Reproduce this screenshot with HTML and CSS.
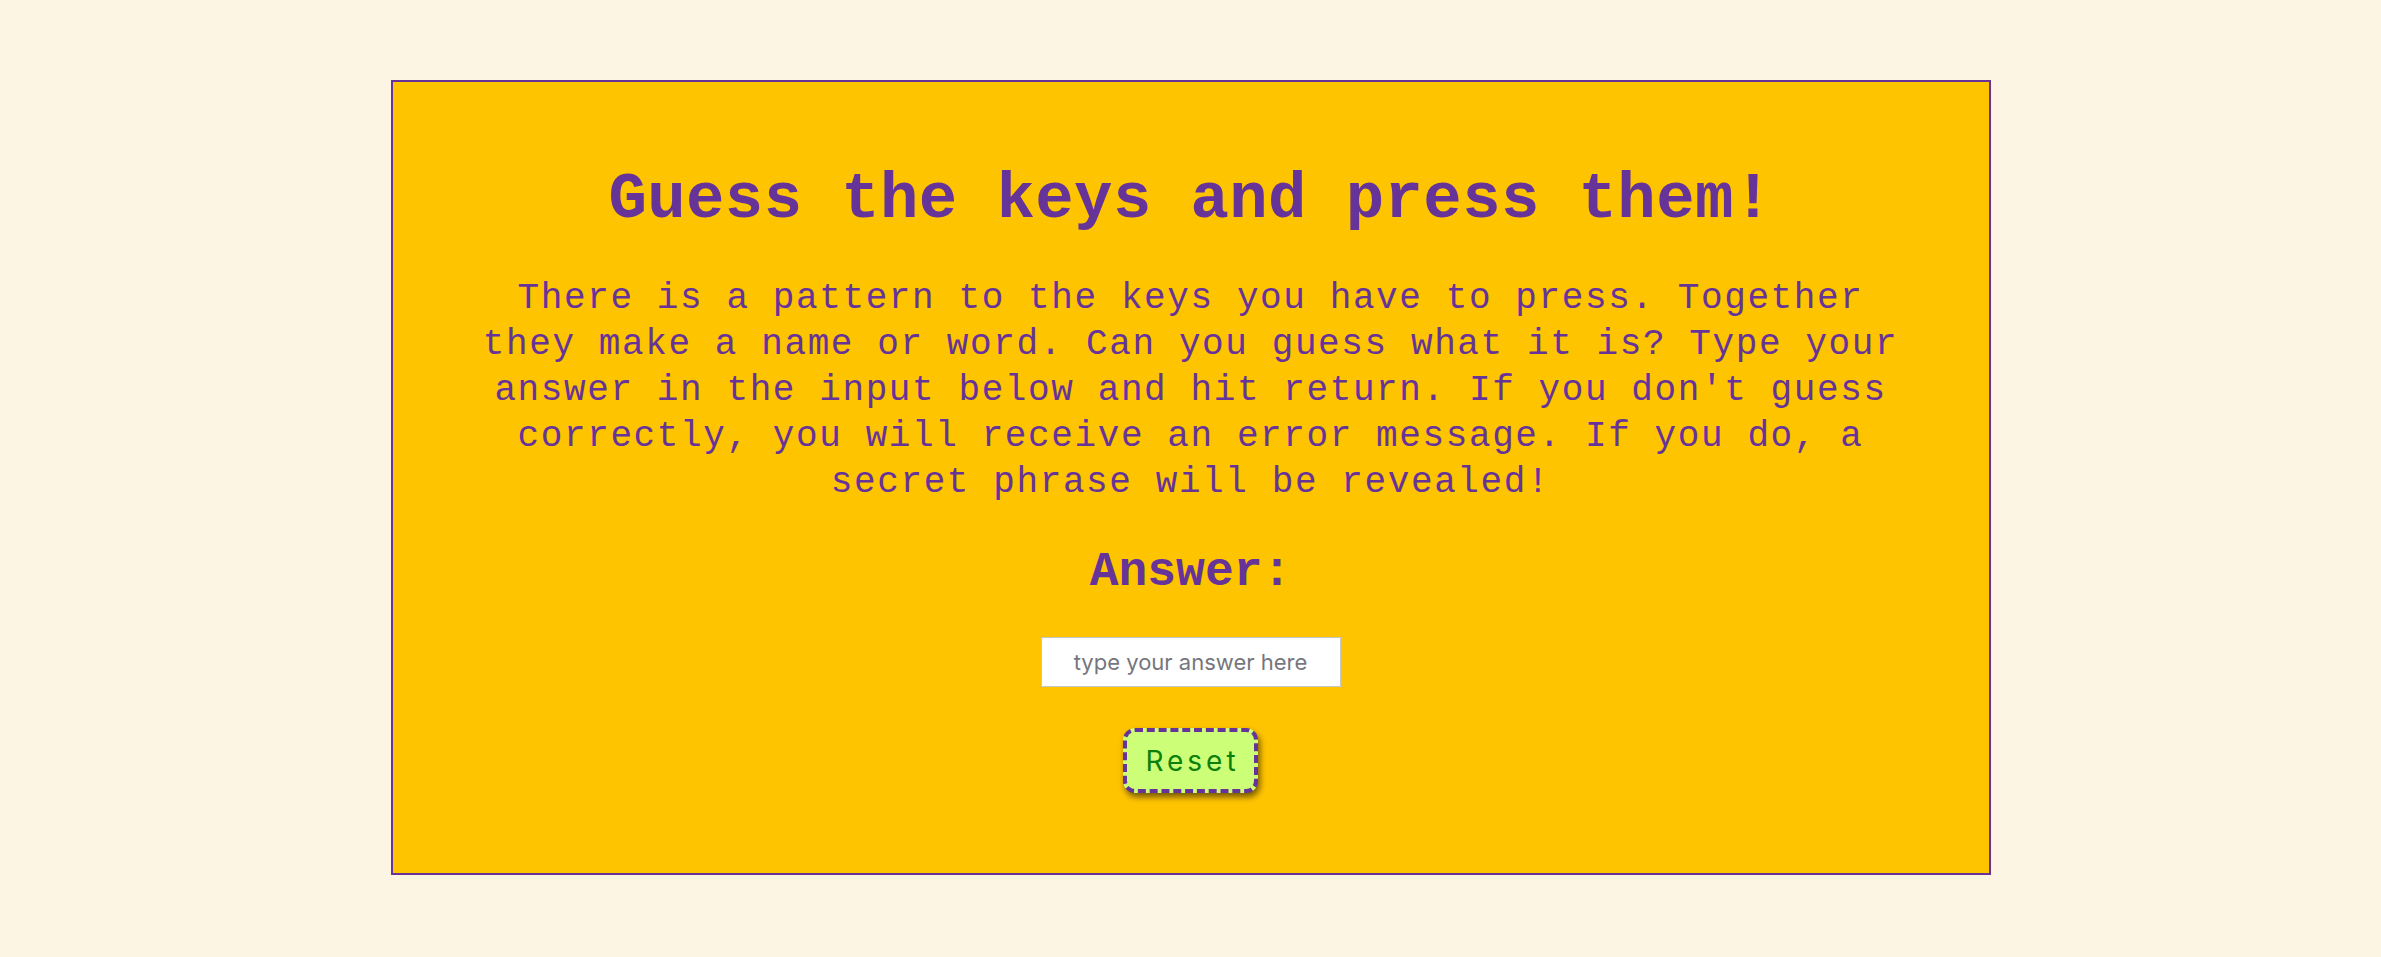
FILE: index.html
```html
<!DOCTYPE html>
<html lang="en">
<head>
<meta charset="utf-8">
<title>Guess the keys</title>
<link rel="stylesheet" href="styles.css">
</head>
<body>
<main class="card">
  <h1 class="title">Guess the keys and press them!</h1>
  <p class="intro">There is a pattern to the keys you have to press. Together they make a name or word. Can you guess what it is? Type your answer in the input below and hit return. If you don't guess correctly, you will receive an error message. If you do, a secret phrase will be revealed!</p>
  <label class="answer-label" for="answer">Answer:</label>
  <input class="answer-input" id="answer" type="text" placeholder="type your answer here">
  <button class="reset-btn" type="button">Reset</button>
</main>
</body>
</html>
```
FILE: styles.css
```css
html, body {
  margin: 0;
  padding: 0;
}
body {
  background: #fdf5e3;
  font-family: "Liberation Mono", "Courier New", monospace;
  color: #663399;
}
.card {
  box-sizing: border-box;
  width: 1600px;
  margin: 80px auto 0;
  padding: 82px 80px 80px;
  background: #ffc400;
  border: 2px solid #663399;
  display: flex;
  flex-direction: column;
  align-items: center;
}
.title {
  margin: 0 0 40px;
  font-size: 64px;
  font-weight: bold;
  line-height: 72px;
  letter-spacing: 0.4px;
  text-align: center;
}
.intro {
  margin: 0 0 39px;
  font-size: 36px;
  line-height: 46px;
  letter-spacing: 1.6px;
  text-align: center;
}
.answer-label {
  margin: 0 0 37px;
  font-size: 48px;
  font-weight: bold;
  line-height: 55px;
}
.answer-input {
  box-sizing: border-box;
  width: 300px;
  height: 50px;
  margin: 0 0 41px;
  border: 1px solid #c6c6c6;
  background: #fff;
  font-family: Inter, "Liberation Sans", sans-serif;
  font-size: 22px;
  text-align: center;
  color: #333;
  padding: 0 6px;
  outline: none;
}
.answer-input::placeholder {
  color: #76767e;
}
.reset-btn {
  box-sizing: border-box;
  height: 65px;
  padding: 0 14px 0 18px;
  border: 4px dashed #663399;
  border-radius: 12px;
  background: #ccff77;
  color: #0b800b;
  font-family: Inter, "Liberation Sans", sans-serif;
  font-size: 28px;
  letter-spacing: 4px;
  box-shadow: 2px 4px 6px rgba(0, 0, 0, 0.55);
  cursor: pointer;
}
```
